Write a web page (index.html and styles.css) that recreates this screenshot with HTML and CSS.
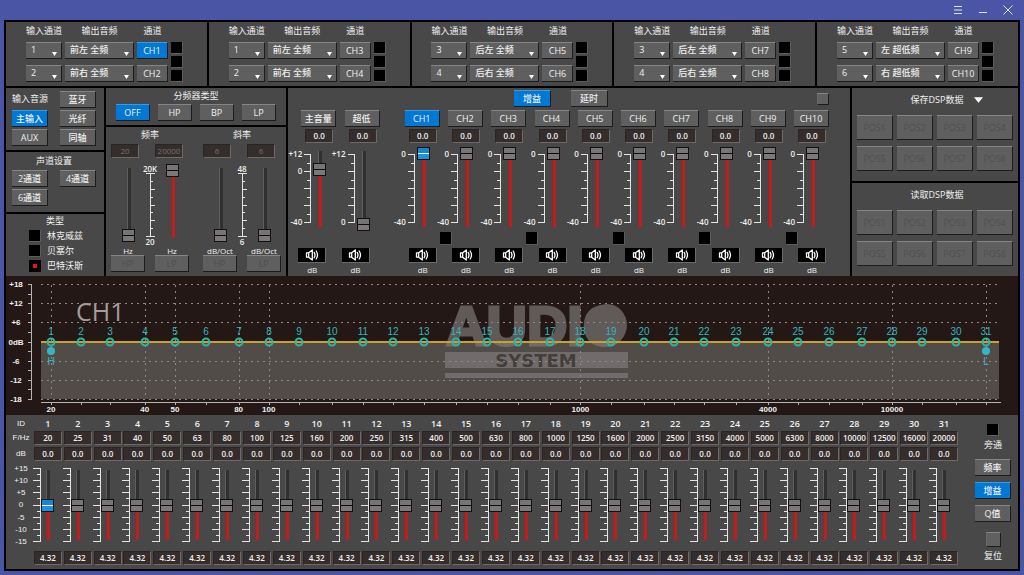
FILE: index.html
```html
<!DOCTYPE html>
<html lang="zh-CN">
<head>
    <meta charset="UTF-8">
    <meta name="viewport" content="width=device-width, initial-scale=1.0">
    <title>DSP</title>
    <link rel="stylesheet" href="styles.css">
</head>
<body>
    <!-- Shared icons -->
    <svg class="icon-defs" aria-hidden="true">
        <symbol id="icon-mute" viewBox="0 0 14 12">
            <path d="M1.5 3.8h2.2v4.4H1.5zM3.7 3.8 7.3 1v10L3.7 8.2" fill="none" stroke="#fff" stroke-width="1.3" stroke-linejoin="round"/>
            <path d="M9.2 3.4q1.5 2.6 0 5.2M11.2 2q2.6 4 0 8" fill="none" stroke="#fff" stroke-width="1.3" stroke-linecap="round"/>
        </symbol>
    </svg>

    <header class="titlebar">
        <button aria-label="菜单"><svg viewBox="0 0 10 10"><path d="M1 1.5h8M1 5h8M1 8.5h8"/></svg></button>
        <button aria-label="最小化"><svg viewBox="0 0 10 10"><path d="M1 7.5h8"/></svg></button>
        <button aria-label="关闭"><svg viewBox="0 0 10 10"><path d="M.5.5l9 9M9.5.5l-9 9"/></svg></button>
    </header>

    <main class="app">
        <!-- Input / output routing -->
        <section class="routing" id="routing"></section>

        <section class="middle">
            <div class="column">
                <div class="panel source">
                    <h2>输入音源</h2>
                    <button class="btn">蓝牙</button>
                    <button class="btn on">主输入</button>
                    <button class="btn">光纤</button>
                    <button class="btn">AUX</button>
                    <button class="btn">同轴</button>
                </div>
                <div class="panel layout-set">
                    <h2>声道设置</h2>
                    <button class="btn">2通道</button>
                    <button class="btn">4通道</button>
                    <button class="btn">6通道</button>
                </div>
                <div class="panel kind">
                    <h2>类型</h2>
                    <label><input type="radio" class="led" name="kind">林克威兹</label>
                    <label><input type="radio" class="led" name="kind">贝塞尔</label>
                    <label><input type="radio" class="led" name="kind" checked>巴特沃斯</label>
                </div>
            </div>

            <div class="column">
                <div class="panel filter-type">
                    <h2>分频器类型</h2>
                    <div class="filter-buttons">
                        <button class="btn on">OFF</button>
                        <button class="btn">HP</button>
                        <button class="btn">BP</button>
                        <button class="btn">LP</button>
                    </div>
                </div>
                <div class="panel filter-set" id="filters"></div>
            </div>

            <div class="panel mixer">
                <div class="mixer-tools">
                    <div class="mixer-mode">
                        <button class="btn on">增益</button>
                        <button class="btn">延时</button>
                    </div>
                    <input type="checkbox" class="led plain" aria-label="全部">
                </div>
                <div class="mixer-strips">
                    <div class="masters" id="masters"></div>
                    <div class="channels" id="channels"></div>
                </div>
            </div>

            <div class="column">
                <div class="panel presets">
                    <div class="presets-title">
                        <h2>保存DSP数据</h2>
                        <button class="drop" aria-label="展开"><svg viewBox="0 0 10 6"><path d="M0 0h10L5 6z"/></svg></button>
                    </div>
                    <div class="preset-grid"></div>
                </div>
                <div class="panel presets">
                    <div class="presets-title"><h2>读取DSP数据</h2></div>
                    <div class="preset-grid"></div>
                </div>
            </div>
        </section>

        <!-- Frequency response -->
        <section class="response">
            <svg id="chart" viewBox="0 0 1012 139" role="img" aria-label="CH1"></svg>
        </section>

        <!-- 31 band equalizer -->
        <section class="panel eq">
            <div class="eq-labels">
                <span>ID</span>
                <span>F/Hz</span>
                <span class="eq-db">dB</span>
                <div class="eq-scale">
                    <span>+15</span><span>+10</span><span>+5</span><span>0</span><span>-5</span><span>-10</span><span>-15</span>
                </div>
            </div>
            <div class="bands" id="bands"></div>
            <div class="eq-side">
                <label class="side-check"><input type="checkbox" class="led">旁通</label>
                <button class="btn">频率</button>
                <button class="btn on">增益</button>
                <button class="btn">Q值</button>
                <label class="side-check reset"><input type="checkbox" class="led plain">复位</label>
            </div>
        </section>
    </main>

    <script src="script.js"></script>
</body>
</html>
```
FILE: styles.css
```css
* {
    box-sizing: border-box;
}

body {
    margin: 0;
    background: #4a55a5;
    color: #f0f0f0;
    font: 9px/14px "Open Sans", "Noto Sans CJK SC", sans-serif;
}

h2 {
    margin: 0;
    font-size: 9px;
    font-weight: 400;
    line-height: 14px;
    text-align: center;
    white-space: nowrap;
}

button,
input,
select {
    margin: 0;
    padding: 0;
    border: 0;
    border-radius: 0;
    color: inherit;
    font: inherit;
    appearance: none;
}

.icon-defs {
    display: block;
    width: 0;
    height: 0;
}

/* --- Title Bar --- */
.titlebar {
    display: flex;
    justify-content: flex-end;
    align-items: center;
    gap: 15px;
    height: 20px;
    padding-right: 11px;
}

.titlebar button {
    display: flex;
    background: none;
}

.titlebar svg {
    width: 10px;
    height: 10px;
    fill: none;
    stroke: #dfe2f5;
}

/* --- Window --- */
.app {
    margin: 0 4px 4px;
    border: 2px solid #000;
    background: #000;
}

.panel {
    background: #484848;
}

/* --- Buttons, boxes, lamps --- */
.btn {
    height: 17px;
    border-top: 1px solid #858585;
    border-right: 1px solid #1c1c1c;
    border-bottom: 1px solid #1c1c1c;
    background: #5f5f5f;
    font-weight: 500;
    line-height: 14px;
    text-align: center;
    white-space: nowrap;
}

.btn.on {
    border-top-color: #3a9be0;
    background: #0078d4;
}

.btn:disabled {
    color: #505050;
}

.value {
    width: 28px;
    height: 14px;
    border: 1px solid #2a2424;
    border-right-color: #6e6868;
    border-bottom-color: #6e6868;
    background: #352d2c;
    font-size: 8px;
    font-weight: 600;
    text-align: center;
}

.value:disabled {
    color: #77706f;
    font-weight: 400;
}

.led {
    flex: none;
    width: 12px;
    height: 12px;
    border-right: 1px solid #5c5c5c;
    border-bottom: 1px solid #5c5c5c;
    background: #000;
}

.led:checked {
    border: 4px solid #000;
    background: #f01010;
}

.led.plain {
    border: 1px solid #1c1c1c;
    border-top-color: #858585;
    border-left-color: #6a6a6a;
    background: #606060;
}

/* --- Faders --- */
.fader {
    writing-mode: vertical-lr;
    direction: rtl;
    flex: none;
    width: 13px;
    height: 84px;
    background:
        linear-gradient(to top, #b52222 var(--level), #303030 var(--level)) 6px 50% / 3px calc(100% - 8px) no-repeat,
        linear-gradient(to top, #8a2a2a var(--level), #5e5e5e var(--level)) 5px 50% / 1px calc(100% - 8px) no-repeat;
}

.fader::-webkit-slider-thumb {
    appearance: none;
    width: 13px;
    height: 13px;
    border: 1px solid #111;
    background: linear-gradient(#757575 5px, #0c0c0c 5px 6px, #7d7777 6px);
}

.fader.on::-webkit-slider-thumb {
    background: linear-gradient(#1686d2 5px, #fff 5px 6px, #1c93dd 6px);
}

.scale {
    display: block;
    flex: none;
    fill: none;
    stroke: #e4e4e4;
    shape-rendering: crispEdges;
}

/* --- Routing --- */
.routing {
    display: grid;
    grid-template-columns: repeat(5, 1fr);
    gap: 2px;
    padding-bottom: 2px;
}

.route {
    display: grid;
    grid-template-columns: 36px 69px 31px 12px;
    grid-template-rows: 13px 17px 17px;
    gap: 6px 3px;
    justify-content: center;
    padding: 1px 4px 4px 0;
}

.route h2 {
    line-height: 16px;
}

.route-leds {
    grid-area: 2 / 4 / 4 / 5;
    display: flex;
    flex-direction: column;
    justify-content: space-between;
}

.route select {
    padding: 0 0 2px 5px;
    background: #5f5f5f url("data:image/svg+xml,%3Csvg xmlns='http://www.w3.org/2000/svg' viewBox='0 0 5 4'%3E%3Cpath d='M0 0h5L2.5 4z' fill='%23fff'/%3E%3C/svg%3E") right 4px bottom 2px / 5px 4px no-repeat;
    text-align: left;
}

/* --- Middle row --- */
.middle {
    display: grid;
    grid-template-columns: minmax(0, 98fr) minmax(0, 180fr) minmax(0, 562fr) minmax(0, 166fr);
    gap: 2px;
}

.column {
    display: flex;
    flex-direction: column;
    gap: 2px;
}

.source,
.layout-set {
    display: grid;
    grid-template-columns: 36px 36px;
    gap: 2px 12px;
    padding: 3px 8px 4px 6px;
}

.source h2 {
    padding-top: 1px;
}

.layout-set {
    padding-top: 1px;
    padding-bottom: 6px;
}

.layout-set h2 {
    grid-column: span 2;
    line-height: 15px;
}

.kind {
    display: flex;
    flex-direction: column;
    gap: 3px;
    flex: 1;
    padding: 1px 0 4px 23px;
}

.kind h2 {
    margin-right: 23px;
    line-height: 12px;
}

.kind label {
    display: flex;
    gap: 6px;
    line-height: 12px;
}

/* --- Crossover --- */
.filter-type {
    padding: 1px 10px 4px;
}

.filter-buttons {
    display: grid;
    grid-template-columns: repeat(4, 1fr);
    gap: 8px;
    padding-top: 1px;
}

.filter-set {
    display: flex;
    justify-content: space-between;
    flex: 1;
    padding: 1px 5px 4px;
}

.filter-group {
    display: grid;
    grid-template-columns: 34px 10px 34px;
    align-content: start;
    justify-items: center;
}

.filter-group h2 {
    grid-column: span 3;
}

.filter-group .low {
    grid-column: 1;
}

.filter-group .high {
    grid-column: 3;
}

.filter-group .value {
    grid-row: 2;
    justify-self: start;
    margin: 2px 0 6px;
}

.filter-group .fader {
    grid-row: 3;
    height: 78px;
}

.filter-scale {
    grid-area: 3 / 2;
    display: flex;
    flex-direction: column;
    align-items: center;
    justify-content: space-between;
    height: 82px;
    font-size: 8px;
    font-weight: 600;
    line-height: 9px;
}

.filter-group .unit {
    grid-row: 4;
    font-size: 8px;
    line-height: 9px;
    white-space: nowrap;
}

.filter-group .btn {
    grid-row: 5;
    width: 34px;
}

/* --- Mixer --- */
.mixer {
    padding: 2px 21px 0 5px;
}

.mixer-tools {
    display: grid;
    grid-template-columns: 1fr auto 1fr;
    align-items: center;
    padding-bottom: 3px;
}

.mixer-mode {
    grid-column: 2;
    display: flex;
    gap: 20px;
}

.mixer-mode .btn {
    width: 37px;
}

.mixer-tools .led {
    justify-self: end;
}

.mixer-strips {
    display: grid;
    grid-template-columns: minmax(0, 2fr) minmax(0, 10fr);
    gap: 17px;
}

.masters {
    display: grid;
    grid-template-columns: repeat(2, minmax(0, 1fr));
}

.channels {
    display: grid;
    grid-template-columns: repeat(10, minmax(0, 1fr));
}

.strip {
    display: flex;
    flex-direction: column;
    align-items: flex-end;
}

.strip > .btn {
    width: 35px;
}

.strip .value {
    margin: 2px 3px 4px 0;
}

.strip-fader {
    display: flex;
    gap: 2px;
    padding-right: 10px;
}

.strip-labels {
    display: flex;
    flex-direction: column;
    justify-content: space-between;
    height: 84px;
    padding: 2px 0 4px;
    font-size: 8px;
    font-weight: 600;
    line-height: 10px;
    text-align: right;
}

.strip-labels span {
    height: 10px;
}

.strip-link {
    align-self: flex-start;
    height: 13px;
    margin: 1px 0 3px;
}

.mute {
    display: grid;
    place-items: center;
    width: 28px;
    height: 15px;
    margin-right: 3px;
    border-right: 1px solid #6a6a6a;
    border-bottom: 1px solid #6a6a6a;
    background: #000;
}

.mute svg {
    width: 14px;
    height: 12px;
}

.strip .unit {
    width: 28px;
    margin-right: 3px;
    font-size: 8px;
    line-height: 13px;
    text-align: center;
}

.masters .mute,
.masters .unit {
    margin-right: 10px;
}

/* --- Presets --- */
.presets {
    flex: 1;
    padding: 5px 5px 10px;
}

.presets-title {
    display: grid;
    grid-template-columns: 1fr auto 1fr;
    align-items: center;
    padding-left: 4px;
}

.presets-title h2 {
    grid-column: 2;
}

.drop {
    display: flex;
    justify-self: start;
    margin-left: 11px;
    background: none;
}

.drop svg {
    width: 9px;
    height: 6px;
    fill: #fff;
}

.preset-grid {
    display: grid;
    grid-template-columns: repeat(4, 1fr);
    gap: 6px 4px;
    padding-top: 8px;
}

.preset-grid .btn {
    height: 25px;
}

/* --- Response chart --- */
.response {
    background: #231815;
}

.response svg {
    display: block;
    width: 100%;
}

.chart-grid {
    stroke: #8f8986;
    stroke-dasharray: 2 4;
}

.chart-axis {
    fill: none;
    stroke: #b8b4b2;
}

.chart-area {
    fill: #524c49;
}

.chart-line {
    stroke: #c9a227;
    stroke-width: 2;
}

.chart-text {
    fill: #f0f0f0;
    font: bold 8px "Liberation Sans", sans-serif;
    text-anchor: middle;
}

.chart-id {
    fill: #35b5bd;
    font: 10px "Liberation Sans", sans-serif;
    text-anchor: middle;
}

.chart-node {
    fill: none;
    stroke: #2fb3a8;
    stroke-width: 2;
}

.chart-dot {
    fill: #35b5c4;
}

.chart-name {
    fill: #a39e9b;
    font: 25px "Open Sans", sans-serif;
}

.logo {
    fill: #827e7e;
    opacity: 0.65;
}

.logo-big {
    font: bold 56px "Liberation Sans", sans-serif;
    stroke: #827e7e;
    stroke-width: 3;
}

.logo-small {
    fill: #3c3735;
    font: bold 18px "DejaVu Sans", sans-serif;
    text-anchor: middle;
}

/* --- Equalizer --- */
.eq {
    display: flex;
    padding: 2px 7px 4px 0;
}

.eq-labels {
    display: flex;
    flex-direction: column;
    flex: none;
    width: 26px;
    padding-left: 4px;
    font: 8px/14px "Liberation Sans", sans-serif;
    text-align: center;
}

.eq-db {
    margin: 2px 0 5px;
}

.eq-scale {
    display: flex;
    flex-direction: column;
    justify-content: space-between;
    height: 78px;
    line-height: 5px;
}

.bands {
    display: grid;
    grid-template-columns: repeat(31, 1fr);
    flex: 1;
}

.band {
    display: flex;
    flex-direction: column;
    align-items: flex-end;
    min-width: 0;
}

.band-id {
    width: 28px;
    font-weight: 600;
    text-align: center;
}

.band .value + .value {
    margin: 2px 0 5px;
}

.band-fader {
    display: flex;
    padding-right: 8px;
    padding-bottom: 7px;
}

.band .fader {
    height: 78px;
}

.eq-side {
    display: flex;
    flex-direction: column;
    gap: 6px;
    flex: none;
    width: 53px;
    padding-left: 17px;
    padding-top: 7px;
}

.side-check {
    display: flex;
    flex-direction: column;
    align-items: center;
    line-height: 17px;
}

.reset {
    padding-top: 4px;
}

.reset .led {
    width: 15px;
    height: 15px;
}
```
FILE: script.js
```js
const routes = [
    { inputs: [1, 2], outputs: ["前左 全频", "前右 全频"], channels: ["CH1", "CH2"] },
    { inputs: [1, 2], outputs: ["前左 全频", "前右 全频"], channels: ["CH3", "CH4"] },
    { inputs: [3, 4], outputs: ["后左 全频", "后右 全频"], channels: ["CH5", "CH6"] },
    { inputs: [3, 4], outputs: ["后左 全频", "后右 全频"], channels: ["CH7", "CH8"] },
    { inputs: [5, 6], outputs: ["左 超低频", "右 超低频"], channels: ["CH9", "CH10"] }
];
const frequencies = [20, 25, 31, 40, 50, 63, 80, 100, 125, 160, 200, 250, 315, 400, 500, 630, 800,
    1000, 1250, 1600, 2000, 2500, 3150, 4000, 5000, 6300, 8000, 10000, 12500, 16000, 20000];

// Vertical fader, level in percent
function fader(label, level, extra = "") {
    return `<input type="range" class="fader ${extra}" aria-label="${label}" value="${level}" style="--level: ${level}%">`;
}

function valueBox(label, value, extra = "") {
    return `<input type="text" class="value ${extra}" aria-label="${label}" value="${value}" ${extra ? "disabled" : ""}>`;
}

// Scale with long and short ticks on the left of the line
function scale(width, height, top, bottom, majors) {
    const steps = (majors - 1) * 2;
    let d = `M${width - 1} ${top}V${bottom}`;
    for (let i = 0; i <= steps; i++) {
        const y = Math.round(top + (bottom - top) * i / steps);
        d += `M${i % 2 ? width - 4 : 0} ${y}H${width}`;
    }
    return `<svg class="scale" width="${width}" height="${height}"><path d="${d}" transform="translate(0 .5)"/></svg>`;
}

// Routing
document.getElementById("routing").innerHTML = routes.map(route => {
    const rows = [0, 1].map(i => {
        const ch = route.channels[i];
        const inputs = [1, 2, 3, 4, 5, 6].map(n => `<option ${n === route.inputs[i] ? "selected" : ""}>${n}</option>`).join("");
        return `<select class="btn" aria-label="${ch} 输入通道">${inputs}</select>
            <select class="btn" aria-label="${ch} 输出音频"><option>${route.outputs[i]}</option></select>
            <button class="btn ${ch === "CH1" ? "on" : ""}">${ch}</button>`;
    }).join("");
    const leds = [1, 2, 3].map(n => `<input type="checkbox" class="led" aria-label="${route.channels.join(" ")} ${n}">`).join("");
    return `<div class="panel route"><h2>输入通道</h2><h2>输出音频</h2><h2>通道</h2><span></span>
        ${rows}<div class="route-leds">${leds}</div></div>`;
}).join("");

// Crossover
const filters = [
    { title: "频率", values: [20, 20000], levels: [0, 100], top: "20K", bottom: "20", unit: "Hz" },
    { title: "斜率", values: [6, 6], levels: [0, 0], top: "48", bottom: "6", unit: "dB/Oct" }
];
let filterTicks = "M0 .5H9M0 63.5H9M4.5 0V64";
for (let i = 1; i < 8; i++) {
    filterTicks += `M4 ${Math.round(i * 63 / 8) + 0.5}H${i % 2 ? 7 : 9}`;
}
document.getElementById("filters").innerHTML = filters.map(f => `
    <div class="filter-group">
        <h2>${f.title}</h2>
        ${valueBox(f.title + " HP", f.values[0], "low")}
        ${valueBox(f.title + " LP", f.values[1], "high")}
        ${fader(f.title + " HP", f.levels[0], "low")}
        <div class="filter-scale"><span>${f.top}</span><svg class="scale" width="9" height="64"><path d="${filterTicks}"/></svg><span>${f.bottom}</span></div>
        ${fader(f.title + " LP", f.levels[1], "high")}
        <span class="unit low">${f.unit}</span>
        <span class="unit high">${f.unit}</span>
        <button class="btn low" disabled>HP</button>
        <button class="btn high" disabled>LP</button>
    </div>`).join("");

// Mixer
function strip(name, level, labels, on, link) {
    return `<div class="strip">
        <button class="btn ${on}">${name}</button>
        ${valueBox(name, "0.0")}
        <div class="strip-fader">
            <div class="strip-labels">${labels.map(l => `<span>${l}</span>`).join("")}</div>
            ${scale(7, 84, 7, 75, 5)}
            ${fader(name, level, on)}
        </div>
        ${link ? `<input type="checkbox" class="led strip-link" aria-label="${name} 联调">` : `<span class="strip-link"></span>`}
        <button class="mute" aria-label="${name} 静音"><svg><use href="#icon-mute"/></svg></button>
        <span class="unit">dB</span>
    </div>`;
}

document.getElementById("masters").innerHTML =
    strip("主音量", 77, ["+12", "0", "", "", "-40"], "", false) +
    strip("超低", 0, ["+12", "", "", "", "0"], "", false);

let channels = "";
for (let i = 1; i <= 10; i++) {
    channels += strip("CH" + i, 100, ["0", "", "", "", "-40"], i === 1 ? "on" : "", i % 2 === 0);
}
document.getElementById("channels").innerHTML = channels;

// Presets
document.querySelectorAll(".preset-grid").forEach(grid => {
    for (let i = 1; i <= 8; i++) {
        grid.innerHTML += `<button class="btn" disabled>POS${i}</button>`;
    }
});

// Response chart
const freqX = f => 45 + Math.log10(f / 20) * 311.6;
const dbY = db => 65.5 - db * 3.18;
const marks = [20, 40, 50, 80, 100, 1000, 4000, 10000];

let chart = `<rect class="chart-area" x="35" y="66" width="958" height="57"/>
    <g class="logo">
        <text class="logo-big" x="440" y="69">AUDIO</text>
        <ellipse cx="601" cy="49" rx="20" ry="21"/>
        <rect x="439" y="76" width="183" height="16"/>
        <rect x="439" y="97" width="183" height="5"/>
        <text class="logo-small" x="530" y="91">SYSTEM</text>
    </g>
    <text class="chart-name" x="70" y="45">CH1</text>`;
for (let db = 18; db >= -18; db -= 3) {
    const y = Math.round(dbY(db)) + 0.5;
    chart += `<path class="chart-axis" d="M22 ${y}H26"/>`;
    if (db % 6 === 0) {
        const label = db === 0 ? "0dB" : (db > 0 ? "+" : "") + db;
        chart += `<text class="chart-text" x="10" y="${y + 2}">${label}</text>`;
        if (db !== 0) {
            chart += `<path class="chart-grid" d="M35 ${y}H993"/>`;
        }
    }
}
chart += `<path class="chart-axis" d="M25.5 8V123M35 126.5H995"/>`;
marks.concat(20000).forEach(f => {
    chart += `<path class="chart-grid" d="M${Math.round(freqX(f)) + 0.5} 9V123"/>`;
});
marks.forEach(f => {
    chart += `<text class="chart-text" x="${freqX(f)}" y="136">${f}</text>`;
});
chart += `<path class="chart-line" d="M35 66H993"/>`;
frequencies.forEach((f, i) => {
    const x = Math.round(freqX(f));
    chart += `<path class="chart-axis" d="M${x + 0.5} 127V129"/>
        <circle class="chart-node" cx="${x}" cy="66" r="3.5"/>
        <text class="chart-id" x="${x}" y="59">${i + 1}</text>`;
});
chart += `<circle class="chart-dot" cx="45" cy="75" r="4"/><text class="chart-id" x="45" y="89">H</text>
    <circle class="chart-dot" cx="980" cy="75" r="4"/><text class="chart-id" x="980" y="89">L</text>`;
document.getElementById("chart").innerHTML = chart;

// Equalizer bands
document.getElementById("bands").innerHTML = frequencies.map((f, i) => `
    <div class="band">
        <span class="band-id">${i + 1}</span>
        ${valueBox("F/Hz " + (i + 1), f)}
        ${valueBox("dB " + (i + 1), "0.0")}
        <div class="band-fader">${scale(8, 78, 2, 75, 7)}${fader("增益 " + (i + 1), 50, i === 0 ? "on" : "")}</div>
        ${valueBox("Q " + (i + 1), "4.32")}
    </div>`).join("");

// Keep the coloured part of a fader in step with its thumb
document.querySelectorAll(".fader").forEach(input => {
    input.addEventListener("input", () => input.style.setProperty("--level", input.value + "%"));
});
```
